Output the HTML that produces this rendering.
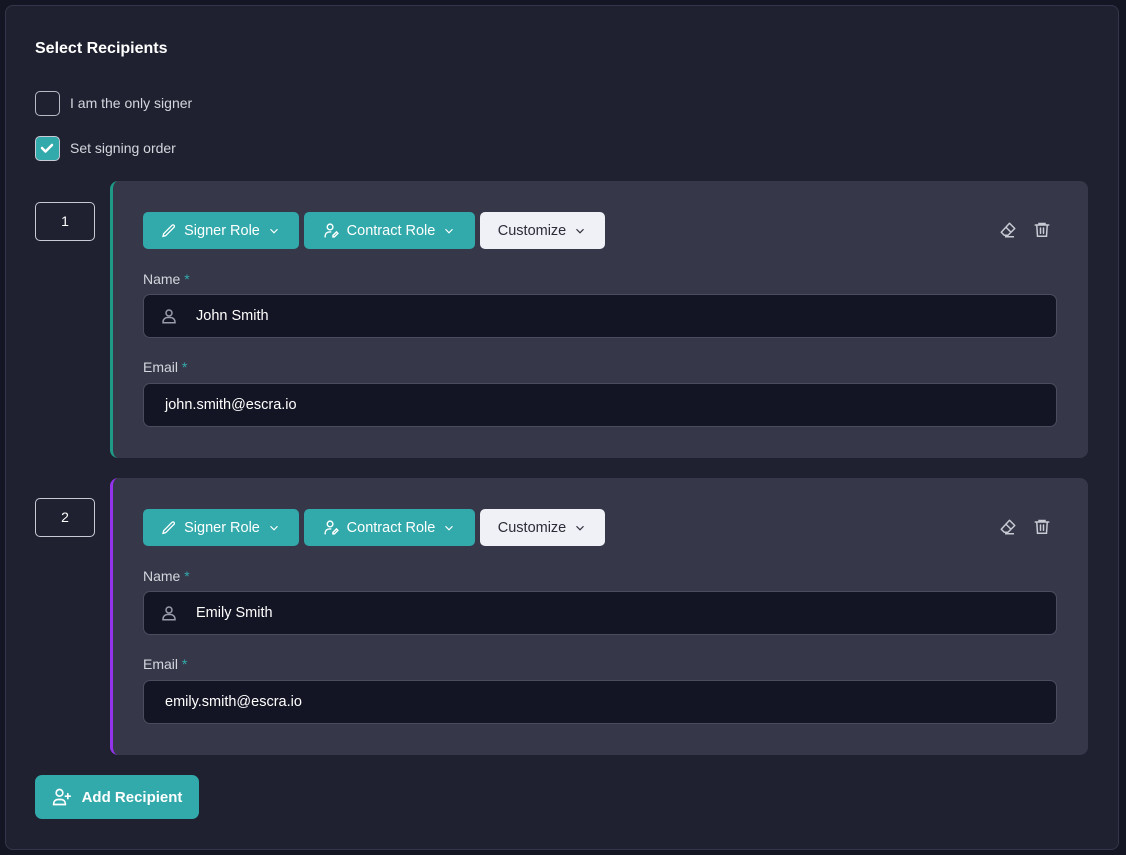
<!DOCTYPE html>
<html><head><style>
*{box-sizing:border-box;margin:0;padding:0}
body{width:1126px;height:855px;background:#141624;font-family:"Liberation Sans",sans-serif;color:#e6e7ee;position:relative;overflow:hidden}
.panel{position:absolute;left:5px;top:5px;width:1114px;height:845px;background:#1f2130;border:1px solid #33364a;border-radius:8px}
.abs{position:absolute}
h1{position:absolute;left:35px;top:40px;font-size:16px;font-weight:bold;color:#fff}
.cb{position:absolute;left:35px;width:25px;height:25px;border:1.5px solid #b8bac6;border-radius:5px}
.lbl{position:absolute;left:70px;font-size:14px;color:#d4d6de}
.num{position:absolute;left:35px;width:60px;height:39px;border:1px solid #c8cad4;border-radius:5px;text-align:center;line-height:37px;font-size:14px;color:#fff}
.card{position:absolute;left:110px;width:978px;height:277px;background:#363849;border-radius:8px;border-left:3px solid #1f9a86}
.btn{position:absolute;top:31px;height:37px;border-radius:5px;background:#32a9ab;color:#fff;font-size:14.5px;display:flex;align-items:center;justify-content:center;gap:7px}
.btn.w{background:#f0f1f6;color:#2a2c38}
.fl{position:absolute;left:30px;font-size:14px;color:#d4d6de}
.fl b{color:#32a9ab;font-weight:normal}
.inp{position:absolute;left:30px;width:914px;height:44px;background:#131524;border:1.5px solid #4a4d5e;border-radius:7px;font-size:14.5px;color:#fff;display:flex;align-items:center}
svg{display:block}
</style></head><body>
<div class="panel"></div>
<h1>Select Recipients</h1>
<div class="cb" style="top:91px"></div>
<div class="lbl" style="top:95px">I am the only signer</div>
<div class="cb" style="top:136px;background:#32a9ab;border-color:#c8cad4"><svg width="22" height="22" viewBox="0 0 22 22"><path d="M6 11l3.5 3.5L16 8" stroke="#fff" stroke-width="2.5" fill="none" stroke-linecap="round" stroke-linejoin="round"/></svg></div>
<div class="lbl" style="top:140px">Set signing order</div>

<div class="num" style="top:202px">1</div>
<div class="num" style="top:498px">2</div>

<div class="card" style="top:181px">
 <div class="btn" style="left:30px;width:156px"><svg width="16" height="16" viewBox="0 0 24 24" fill="none" stroke="#fff" stroke-width="2" stroke-linecap="round"><path d="M16.5 3.5a2.1 2.1 0 013 3L7 19l-4 1 1-4z"/></svg>Signer Role<svg width="14" height="14" viewBox="0 0 24 24" fill="none" stroke="#fff" stroke-width="2"><path d="M6 9l6 6 6-6"/></svg></div>
 <div class="btn" style="left:191px;width:171px"><svg width="17" height="17" viewBox="0 0 24 24" fill="none" stroke="#fff" stroke-width="2" stroke-linecap="round"><circle cx="10" cy="7" r="4"/><path d="M3 21v-1a6 6 0 016-6h2"/><path d="M19 14l2 2-5 5h-2v-2z"/></svg>Contract Role<svg width="14" height="14" viewBox="0 0 24 24" fill="none" stroke="#fff" stroke-width="2"><path d="M6 9l6 6 6-6"/></svg></div>
 <div class="btn w" style="left:367px;width:125px">Customize<svg width="14" height="14" viewBox="0 0 24 24" fill="none" stroke="#2a2c38" stroke-width="2"><path d="M6 9l6 6 6-6"/></svg></div>
 <svg class="abs" style="left:886px;top:40px" width="18" height="18" viewBox="0 0 24 24" fill="none" stroke="#c8cad4" stroke-width="2" stroke-linejoin="round"><path d="M14 3l7 7-9 9H7l-4-4z"/><path d="M9 8l7 7"/><path d="M8 21h12"/></svg>
 <svg class="abs" style="left:920px;top:39px" width="18" height="19" viewBox="0 0 24 24" fill="none" stroke="#c8cad4" stroke-width="2" stroke-linecap="round"><path d="M3 6h18M8 6V4h8v2M5 6l1 15h12l1-15M10 10v7M14 10v7"/></svg>
 <div class="fl" style="top:90px">Name <b>*</b></div>
 <div class="inp" style="top:113px"><svg style="margin:0 18px 0 16px" width="18" height="18" viewBox="0 0 24 24" fill="none" stroke="#9a9cab" stroke-width="2"><circle cx="12" cy="8" r="4"/><path d="M4 21v-1a6 6 0 016-6h4a6 6 0 016 6v1z"/></svg>John Smith</div>
 <div class="fl" style="top:178px">Email <b>*</b></div>
 <div class="inp" style="top:202px;padding-left:21px">john.smith@escra.io</div>
</div>

<div class="card" style="top:478px;border-left-color:#9333ea">
 <div class="btn" style="left:30px;width:156px"><svg width="16" height="16" viewBox="0 0 24 24" fill="none" stroke="#fff" stroke-width="2" stroke-linecap="round"><path d="M16.5 3.5a2.1 2.1 0 013 3L7 19l-4 1 1-4z"/></svg>Signer Role<svg width="14" height="14" viewBox="0 0 24 24" fill="none" stroke="#fff" stroke-width="2"><path d="M6 9l6 6 6-6"/></svg></div>
 <div class="btn" style="left:191px;width:171px"><svg width="17" height="17" viewBox="0 0 24 24" fill="none" stroke="#fff" stroke-width="2" stroke-linecap="round"><circle cx="10" cy="7" r="4"/><path d="M3 21v-1a6 6 0 016-6h2"/><path d="M19 14l2 2-5 5h-2v-2z"/></svg>Contract Role<svg width="14" height="14" viewBox="0 0 24 24" fill="none" stroke="#fff" stroke-width="2"><path d="M6 9l6 6 6-6"/></svg></div>
 <div class="btn w" style="left:367px;width:125px">Customize<svg width="14" height="14" viewBox="0 0 24 24" fill="none" stroke="#2a2c38" stroke-width="2"><path d="M6 9l6 6 6-6"/></svg></div>
 <svg class="abs" style="left:886px;top:40px" width="18" height="18" viewBox="0 0 24 24" fill="none" stroke="#c8cad4" stroke-width="2" stroke-linejoin="round"><path d="M14 3l7 7-9 9H7l-4-4z"/><path d="M9 8l7 7"/><path d="M8 21h12"/></svg>
 <svg class="abs" style="left:920px;top:39px" width="18" height="19" viewBox="0 0 24 24" fill="none" stroke="#c8cad4" stroke-width="2" stroke-linecap="round"><path d="M3 6h18M8 6V4h8v2M5 6l1 15h12l1-15M10 10v7M14 10v7"/></svg>
 <div class="fl" style="top:90px">Name <b>*</b></div>
 <div class="inp" style="top:113px"><svg style="margin:0 18px 0 16px" width="18" height="18" viewBox="0 0 24 24" fill="none" stroke="#9a9cab" stroke-width="2"><circle cx="12" cy="8" r="4"/><path d="M4 21v-1a6 6 0 016-6h4a6 6 0 016 6v1z"/></svg>Emily Smith</div>
 <div class="fl" style="top:178px">Email <b>*</b></div>
 <div class="inp" style="top:202px;padding-left:21px">emily.smith@escra.io</div>
</div>

<div class="btn" style="left:35px;top:775px;width:164px;height:44px;border-radius:7px;font-weight:bold;font-size:15px;gap:10px"><svg width="20" height="20" viewBox="0 0 24 24" fill="none" stroke="#fff" stroke-width="2" stroke-linecap="round"><circle cx="9" cy="7" r="4"/><path d="M2 21v-1a5 5 0 015-5h4a5 5 0 015 5v1z"/><path d="M19 8v6M16 11h6"/></svg>Add Recipient</div>
</body></html>
